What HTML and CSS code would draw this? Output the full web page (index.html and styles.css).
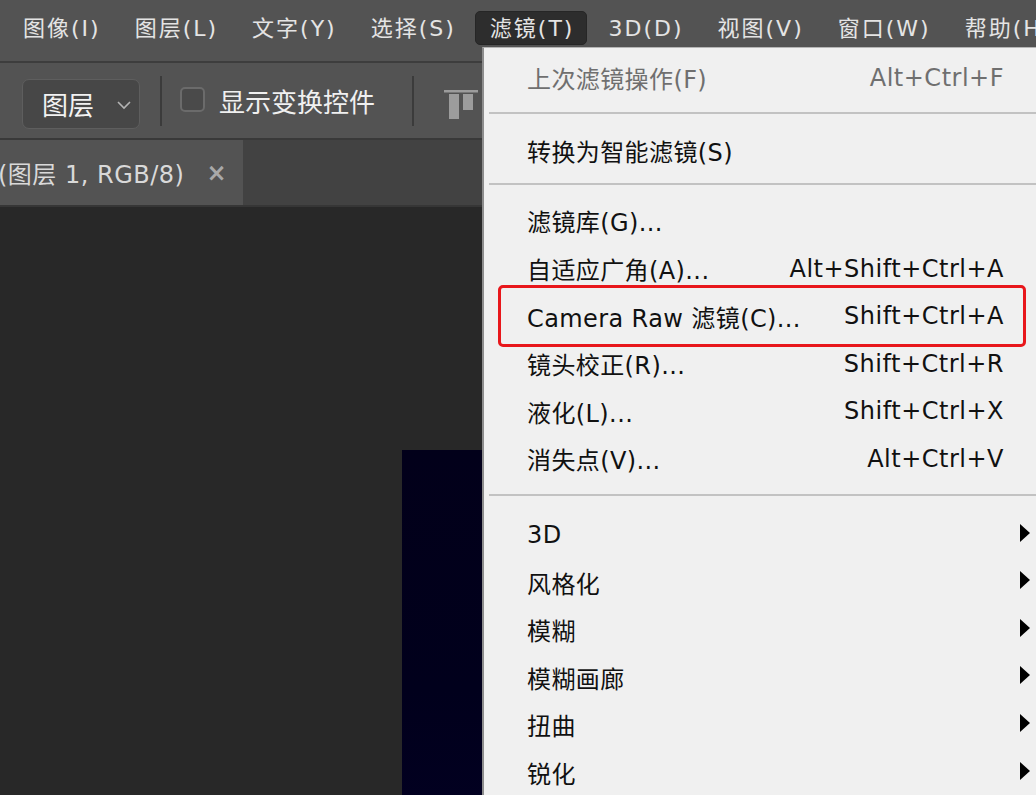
FILE: index.html
```html
<!DOCTYPE html>
<html lang="zh-CN">
<head>
<meta charset="utf-8">
<title>Photoshop 滤镜菜单</title>
<link rel="stylesheet" href="styles.css">
</head>
<body>
<div class="app">
  <header class="menubar">
    <span class="mb-item">图像(I)</span>
    <span class="mb-item">图层(L)</span>
    <span class="mb-item">文字(Y)</span>
    <span class="mb-item">选择(S)</span>
    <span class="mb-item active">滤镜(T)</span>
    <span class="mb-item">3D(D)</span>
    <span class="mb-item">视图(V)</span>
    <span class="mb-item">窗口(W)</span>
    <span class="mb-item">帮助(H)</span>
  </header>

  <div class="toolbar">
    <div class="select">
      <span class="select-label">图层</span>
      <svg class="chev" width="16" height="10" viewBox="0 0 16 10"><polyline points="2,2 8,8 14,2" fill="none" stroke="#b4b4b4" stroke-width="1.6"/></svg>
    </div>
    <div class="vsep"></div>
    <label class="check"><span class="box"></span><span class="check-label">显示变换控件</span></label>
    <div class="vsep vsep-2"></div>
    <svg class="align-icon" width="34" height="30" viewBox="0 0 34 30">
      <rect x="0" y="0" width="34" height="2.5" fill="#9c9c9c"/>
      <rect x="5" y="4" width="10" height="25" fill="#9c9c9c"/>
      <rect x="19" y="4" width="10" height="16" fill="#9c9c9c"/>
    </svg>
  </div>

  <div class="tabbar">
    <div class="tab">
      <span class="tab-title">(图层 1, RGB/8)</span>
      <span class="tab-close">×</span>
    </div>
  </div>

  <main class="workspace">
    <div class="doc"></div>
  </main>

  <nav class="dropdown">
    <div class="mi disabled"><span class="ml">上次滤镜操作(F)</span><span class="ms">Alt+Ctrl+F</span><span class="sub"></span></div>
    <div class="msep"></div>
    <div class="mi"><span class="ml">转换为智能滤镜(S)</span><span class="ms"></span><span class="sub"></span></div>
    <div class="msep msep-b"></div>
    <div class="mi"><span class="ml">滤镜库(G)...</span><span class="ms"></span><span class="sub"></span></div>
    <div class="mi"><span class="ml">自适应广角(A)...</span><span class="ms">Alt+Shift+Ctrl+A</span><span class="sub"></span></div>
    <div class="mi highlight"><span class="ml">Camera Raw 滤镜(C)...</span><span class="ms">Shift+Ctrl+A</span><span class="sub"></span></div>
    <div class="mi"><span class="ml">镜头校正(R)...</span><span class="ms">Shift+Ctrl+R</span><span class="sub"></span></div>
    <div class="mi"><span class="ml">液化(L)...</span><span class="ms">Shift+Ctrl+X</span><span class="sub"></span></div>
    <div class="mi"><span class="ml">消失点(V)...</span><span class="ms">Alt+Ctrl+V</span><span class="sub"></span></div>
    <div class="msep msep-c"></div>
    <div class="mi"><span class="ml">3D</span><span class="ms"></span><span class="sub"><i class="tri"></i></span></div>
    <div class="mi"><span class="ml">风格化</span><span class="ms"></span><span class="sub"><i class="tri"></i></span></div>
    <div class="mi"><span class="ml">模糊</span><span class="ms"></span><span class="sub"><i class="tri"></i></span></div>
    <div class="mi"><span class="ml">模糊画廊</span><span class="ms"></span><span class="sub"><i class="tri"></i></span></div>
    <div class="mi"><span class="ml">扭曲</span><span class="ms"></span><span class="sub"><i class="tri"></i></span></div>
    <div class="mi"><span class="ml">锐化</span><span class="ms"></span><span class="sub"><i class="tri"></i></span></div>
  </nav>
</div>
</body>
</html>
```

FILE: styles.css
```css
* { box-sizing: border-box; }

html, body {
  margin: 0;
  padding: 0;
  width: 1036px;
  height: 795px;
  overflow: hidden;
  background: #282828;
  font-family: "DejaVu Sans", "Noto Sans CJK SC", sans-serif;
}

.app {
  position: relative;
  width: 1036px;
  height: 795px;
  display: flex;
  flex-direction: column;
  overflow: hidden;
}

/* ---------- menu bar ---------- */
.menubar {
  height: 63px;
  flex: none;
  background: #535353;
  display: flex;
  align-items: flex-start;
  padding: 11px 0 0 8px;
  gap: 6px;
  white-space: nowrap;
  border-bottom: 2px solid #3d3d3d;
}

.mb-item {
  height: 34px;
  line-height: 34px;
  padding: 0 12px 0 14px;
  font-size: 22px;
  letter-spacing: 2px;
  color: #e4e4e4;
  border-radius: 5px;
  border: 1px solid transparent;
}

.mb-item.active {
  background: #2d2d2d;
  border-color: #262626;
}

/* ---------- tool options bar ---------- */
.toolbar {
  height: 77px;
  flex: none;
  background: #535353;
  display: flex;
  align-items: center;
  padding-left: 22px;
  border-bottom: 2px solid #393939;
  white-space: nowrap;
}

.select {
  width: 118px;
  height: 50px;
  margin-top: 6px;
  border: 1.5px solid #5e5e5e;
  border-radius: 7px;
  background: #474747;
  display: flex;
  align-items: center;
  padding-left: 19px;
}

.select-label {
  font-size: 26px;
  color: #f2f2f2;
  flex: 1;
}

.chev {
  margin-right: 7px;
  margin-top: 2px;
}

.vsep {
  width: 2px;
  height: 50px;
  background: #3b3b3b;
  margin-left: 20px;
}

.vsep-2 {
  margin-left: 37px;
}

.check {
  display: flex;
  align-items: center;
  margin-left: 18px;
}

.box {
  width: 25px;
  height: 25px;
  border: 2px solid #6b6b6b;
  border-radius: 5px;
  background: #4a4a4a;
  margin-top: -3px;
}

.check-label {
  margin-left: 14px;
  font-size: 26px;
  color: #f0f0f0;
}

.align-icon {
  margin-left: 30px;
  margin-top: 9px;
}

/* ---------- document tabs ---------- */
.tabbar {
  height: 67px;
  flex: none;
  background: #424242;
  display: flex;
  border-bottom: 2px solid #363636;
}

.tab {
  width: 243px;
  background: #535353;
  display: flex;
  align-items: center;
  white-space: nowrap;
  overflow: hidden;
}

.tab-title {
  margin-left: -2px;
  font-size: 24px;
  letter-spacing: 0.5px;
  color: #d9d9d9;
}

.tab-close {
  margin-left: 22px;
  font-size: 24px;
  font-weight: bold;
  color: #a9a9a9;
}

/* ---------- workspace ---------- */
.workspace {
  flex: 1;
  background: #282828;
  padding: 243px 0 0 402px;
  overflow: hidden;
}

.doc {
  width: 400px;
  height: 400px;
  background: linear-gradient(180deg, #02001a 0%, #01001c 60%, #020022 100%);
}

/* ---------- filter dropdown ---------- */
.dropdown {
  position: absolute;
  left: 482px;
  top: 47px;
  right: 0;
  bottom: 0;
  background: #f0f0f0;
  border-left: 2px solid #8d8d8d;
  border-top: 1px solid #b5b5b5;
  padding-top: 6px;
  font-size: 24px;
  color: #111;
}

.mi {
  position: relative;
  height: 47.6px;
  display: flex;
  align-items: center;
  padding-left: 43px;
  white-space: nowrap;
}

.ml {
  flex: 1;
  letter-spacing: 0.4px;
}

.ms {
  letter-spacing: 0.5px;
}

.sub {
  width: 32px;
  flex: none;
  display: flex;
  align-items: center;
}

.tri {
  display: block;
  width: 0;
  height: 0;
  margin-left: 16px;
  margin-top: -4px;
  border-left: 10px solid #000;
  border-top: 9px solid transparent;
  border-bottom: 9px solid transparent;
}

.mi.disabled {
  color: #6f6f6f;
}

.mi.highlight::after {
  content: "";
  position: absolute;
  left: 14px;
  right: 10px;
  top: -7px;
  bottom: -7px;
  border: 3px solid #e8171b;
  border-radius: 5px;
}

.msep {
  height: 2px;
  background: #c2c2c2;
  margin: 10px 0 13px 5px;
}

.msep-b {
  margin: 9px 0 12px 5px;
}

.msep-c {
  margin: 11px 0 15px 5px;
}
```
